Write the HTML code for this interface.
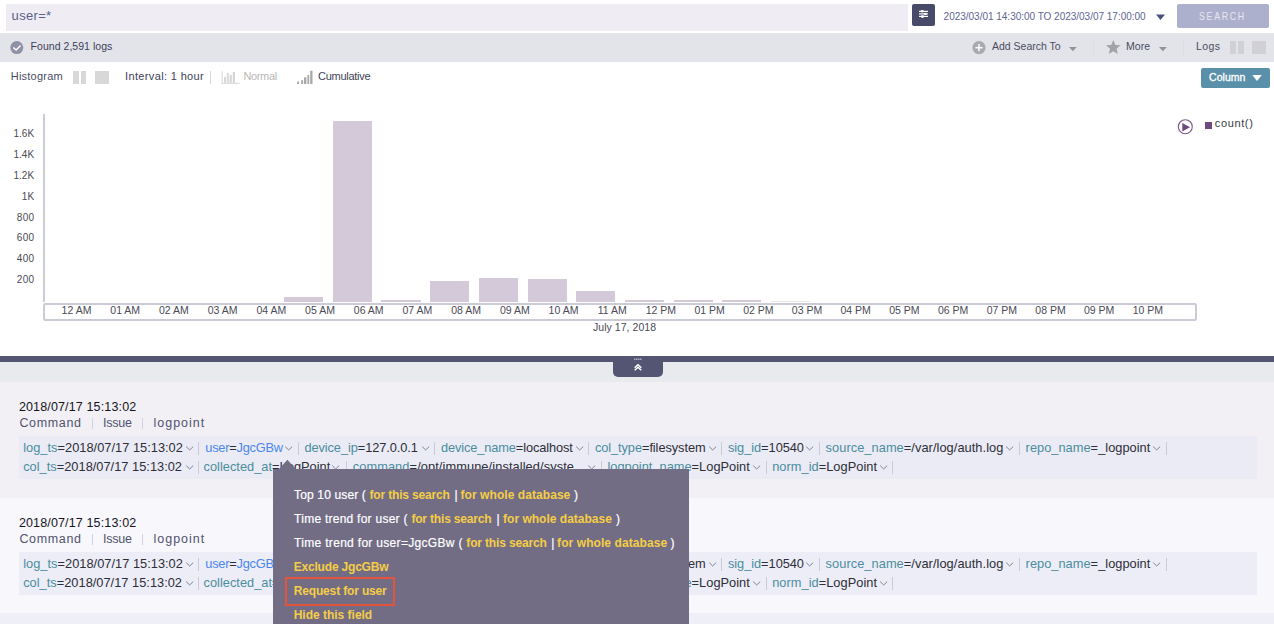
<!DOCTYPE html>
<html><head><meta charset="utf-8"><style>
html,body{margin:0;padding:0;width:1274px;height:624px;overflow:hidden;background:#fff;position:relative;font-family:"Liberation Sans",sans-serif;}
.t{position:absolute;white-space:nowrap;}
.r{position:absolute;}
</style></head><body>
<div class="r" style="left:6px;top:4px;width:902px;height:27px;background:#efedf3;"></div>
<div class="t" style="left:11.60px;top:9.00px;font-size:13px;line-height:13px;color:#5b5f8c;letter-spacing:0.313px;">user=*</div>
<div class="r" style="left:912px;top:4px;width:23px;height:22px;background:#474a68;border-radius:2px;"></div>
<svg class="r" style="left:912px;top:4px" width="23" height="22" viewBox="0 0 23 22">
<g stroke="#fff" stroke-width="1.2">
<line x1="7" y1="7.4" x2="16" y2="7.4"/><line x1="7" y1="9.9" x2="16" y2="9.9"/><line x1="7" y1="12.4" x2="16" y2="12.4"/>
</g>
<g fill="#fff"><ellipse cx="10.2" cy="7.2" rx="1.7" ry="1.3"/><ellipse cx="13.3" cy="9.9" rx="1.5" ry="1.1"/><ellipse cx="10.5" cy="12.6" rx="1.7" ry="1.3"/></g>
</svg>
<div class="t" style="left:943.60px;top:11.54px;font-size:10px;line-height:10px;color:#5f6593;letter-spacing:-0.014px;">2023/03/01 14:30:00 TO 2023/03/07 17:00:00</div>
<svg class="r" style="left:1155px;top:14px" width="11" height="7"><polygon points="1,0.5 10,0.5 5.5,6" fill="#4b4f80"/></svg>
<div class="r" style="left:1177px;top:4px;width:92px;height:24px;background:#adb0cc;border-radius:2px;"></div>
<div class="t" style="left:1198.90px;top:11.41px;font-size:10.5px;line-height:10.5px;color:#e6e7f0;letter-spacing:2.009px;transform:scaleX(0.84);transform-origin:0 0;">SEARCH</div>
<div class="r" style="left:0px;top:33px;width:1274px;height:29px;background:#e3e4ea;"></div>
<svg class="r" style="left:10px;top:41px" width="14" height="14" viewBox="0 0 14 14">
<circle cx="6.8" cy="6.6" r="6.5" fill="#8f91a6"/>
<polyline points="3.3,6.5 6.1,9.1 10.6,4.6" fill="none" stroke="#fff" stroke-width="1.35"/>
</svg>
<div class="t" style="left:30.60px;top:40.51px;font-size:10.5px;line-height:10.5px;color:#3d3f5a;letter-spacing:0.037px;">Found 2,591 logs</div>
<svg class="r" style="left:972px;top:41px" width="14" height="14" viewBox="0 0 14 14">
<circle cx="7" cy="6.7" r="6.6" fill="#a9a9af"/>
<line x1="3.4" y1="6.7" x2="10.6" y2="6.7" stroke="#fff" stroke-width="1.5"/>
<line x1="7" y1="3.1" x2="7" y2="10.3" stroke="#fff" stroke-width="1.5"/>
</svg>
<div class="t" style="left:992.00px;top:41.31px;font-size:10.5px;line-height:10.5px;color:#4a4c60;letter-spacing:-0.008px;">Add Search To</div>
<svg class="r" style="left:1069px;top:46.5px" width="9" height="6"><polygon points="0,0 7.8,0 3.9,4.3" fill="#939399"/></svg>
<div class="r" style="left:1093px;top:40px;width:1px;height:16px;background:#dcdce2;"></div>
<svg class="r" style="left:1105.5px;top:39.8px" width="15" height="15"><polygon points="7.30,0.00 9.33,4.88 14.60,5.30 10.58,8.74 11.81,13.89 7.30,11.13 2.79,13.89 4.02,8.74 0.00,5.30 5.27,4.88" fill="#a2a2a8"/></svg>
<div class="t" style="left:1126.00px;top:41.31px;font-size:10.5px;line-height:10.5px;color:#4a4c60;letter-spacing:0.027px;">More</div>
<svg class="r" style="left:1159px;top:46.5px" width="9" height="6"><polygon points="0,0 7.8,0 3.9,4.3" fill="#939399"/></svg>
<div class="r" style="left:1183px;top:40px;width:1px;height:16px;background:#dcdce2;"></div>
<div class="t" style="left:1196.00px;top:41.31px;font-size:10.5px;line-height:10.5px;color:#4a4c60;letter-spacing:0.412px;">Logs</div>
<div class="r" style="left:1230px;top:41px;width:5.5px;height:13px;background:#d0d0d6;"></div>
<div class="r" style="left:1238px;top:41px;width:5.5px;height:13px;background:#d0d0d6;"></div>
<div class="r" style="left:1252px;top:41px;width:14px;height:13px;background:#d0d0d6;"></div>
<div class="t" style="left:10.70px;top:70.69px;font-size:11px;line-height:11px;color:#4a4c63;letter-spacing:0.247px;">Histogram</div>
<div class="r" style="left:73px;top:71px;width:5.5px;height:12.7px;background:#d8d8d8;"></div>
<div class="r" style="left:80.8px;top:71px;width:5.5px;height:12.7px;background:#d8d8d8;"></div>
<div class="r" style="left:95.3px;top:71px;width:13.3px;height:12.7px;background:#d8d8d8;"></div>
<div class="t" style="left:125.10px;top:70.69px;font-size:11px;line-height:11px;color:#3e3f58;letter-spacing:0.349px;">Interval: 1 hour</div>
<div class="r" style="left:210px;top:71px;width:1px;height:13px;background:#d8d8d8;"></div>
<svg class="r" style="left:221px;top:71px" width="20" height="14" viewBox="0 0 20 14">
<g fill="#d6d6d6"><rect x="0.6" y="0.2" width="1" height="12.6"/><rect x="0.6" y="11.8" width="18" height="1"/>
<rect x="3" y="5.8" width="1.9" height="6"/><rect x="5.8" y="2" width="1.9" height="9.8"/><rect x="8.6" y="4" width="2.2" height="7.8"/><rect x="11.8" y="1.1" width="2.2" height="10.7"/></g></svg>
<div class="t" style="left:243.50px;top:70.69px;font-size:11px;line-height:11px;color:#b8b8b8;letter-spacing:-0.371px;">Normal</div>
<svg class="r" style="left:296px;top:70px" width="18" height="15" viewBox="0 0 18 15">
<g fill="#a9a9a9"><rect x="1" y="11.6" width="2" height="2.4"/><rect x="5.2" y="10.2" width="1.9" height="3.8"/><rect x="8" y="7.3" width="2.4" height="6.7"/><rect x="11.4" y="5" width="1.8" height="9"/><rect x="14.2" y="0.7" width="2.3" height="13.3"/></g></svg>
<div class="t" style="left:318.00px;top:70.69px;font-size:11px;line-height:11px;color:#3e3f58;letter-spacing:-0.269px;">Cumulative</div>
<div class="r" style="left:1201px;top:68px;width:69px;height:20px;background:#5b90ab;border-radius:2px;"></div>
<div class="t" style="left:1209.00px;top:71.71px;font-size:10.5px;line-height:10.5px;color:#ffffff;letter-spacing:0.043px;-webkit-text-stroke:0.3px #fff;">Column</div>
<svg class="r" style="left:1251.5px;top:75px" width="11" height="7"><polygon points="0.3,0 9.8,0 5.05,6" fill="#fff"/></svg>
<div class="r" style="left:43px;top:114px;width:2px;height:188px;background:#cbccd7;"></div>
<div class="t" style="left:13.53px;top:129.44px;font-size:10px;line-height:10px;color:#4a4a55;">1.6K</div>
<div class="t" style="left:13.53px;top:150.24px;font-size:10px;line-height:10px;color:#4a4a55;">1.4K</div>
<div class="t" style="left:13.53px;top:171.03px;font-size:10px;line-height:10px;color:#4a4a55;">1.2K</div>
<div class="t" style="left:21.87px;top:191.84px;font-size:10px;line-height:10px;color:#4a4a55;">1K</div>
<div class="t" style="left:16.80px;top:212.64px;font-size:10px;line-height:10px;color:#4a4a55;letter-spacing:0.310px;">800</div>
<div class="t" style="left:16.80px;top:233.44px;font-size:10px;line-height:10px;color:#4a4a55;letter-spacing:0.310px;">600</div>
<div class="t" style="left:16.80px;top:254.24px;font-size:10px;line-height:10px;color:#4a4a55;letter-spacing:0.310px;">400</div>
<div class="t" style="left:16.80px;top:275.04px;font-size:10px;line-height:10px;color:#4a4a55;letter-spacing:0.310px;">200</div>
<div class="r" style="left:43px;top:303px;width:1150px;height:14px;border:2px solid #cacbd6;border-radius:2px;"></div>
<div class="t" style="left:61.62px;top:305.31px;font-size:10.5px;line-height:10.5px;color:#4a4a55;">12 AM</div>
<div class="t" style="left:110.32px;top:305.31px;font-size:10.5px;line-height:10.5px;color:#4a4a55;">01 AM</div>
<div class="t" style="left:159.02px;top:305.31px;font-size:10.5px;line-height:10.5px;color:#4a4a55;">02 AM</div>
<div class="t" style="left:207.72px;top:305.31px;font-size:10.5px;line-height:10.5px;color:#4a4a55;">03 AM</div>
<div class="t" style="left:256.42px;top:305.31px;font-size:10.5px;line-height:10.5px;color:#4a4a55;">04 AM</div>
<div class="t" style="left:305.12px;top:305.31px;font-size:10.5px;line-height:10.5px;color:#4a4a55;">05 AM</div>
<div class="t" style="left:353.82px;top:305.31px;font-size:10.5px;line-height:10.5px;color:#4a4a55;">06 AM</div>
<div class="t" style="left:402.52px;top:305.31px;font-size:10.5px;line-height:10.5px;color:#4a4a55;">07 AM</div>
<div class="t" style="left:451.22px;top:305.31px;font-size:10.5px;line-height:10.5px;color:#4a4a55;">08 AM</div>
<div class="t" style="left:499.92px;top:305.31px;font-size:10.5px;line-height:10.5px;color:#4a4a55;">09 AM</div>
<div class="t" style="left:548.62px;top:305.31px;font-size:10.5px;line-height:10.5px;color:#4a4a55;">10 AM</div>
<div class="t" style="left:597.70px;top:305.31px;font-size:10.5px;line-height:10.5px;color:#4a4a55;">11 AM</div>
<div class="t" style="left:645.73px;top:305.31px;font-size:10.5px;line-height:10.5px;color:#4a4a55;">12 PM</div>
<div class="t" style="left:694.43px;top:305.31px;font-size:10.5px;line-height:10.5px;color:#4a4a55;">01 PM</div>
<div class="t" style="left:743.13px;top:305.31px;font-size:10.5px;line-height:10.5px;color:#4a4a55;">02 PM</div>
<div class="t" style="left:791.83px;top:305.31px;font-size:10.5px;line-height:10.5px;color:#4a4a55;">03 PM</div>
<div class="t" style="left:840.53px;top:305.31px;font-size:10.5px;line-height:10.5px;color:#4a4a55;">04 PM</div>
<div class="t" style="left:889.23px;top:305.31px;font-size:10.5px;line-height:10.5px;color:#4a4a55;">05 PM</div>
<div class="t" style="left:937.93px;top:305.31px;font-size:10.5px;line-height:10.5px;color:#4a4a55;">06 PM</div>
<div class="t" style="left:986.63px;top:305.31px;font-size:10.5px;line-height:10.5px;color:#4a4a55;">07 PM</div>
<div class="t" style="left:1035.33px;top:305.31px;font-size:10.5px;line-height:10.5px;color:#4a4a55;">08 PM</div>
<div class="t" style="left:1084.03px;top:305.31px;font-size:10.5px;line-height:10.5px;color:#4a4a55;">09 PM</div>
<div class="t" style="left:1132.73px;top:305.31px;font-size:10.5px;line-height:10.5px;color:#4a4a55;">10 PM</div>
<div class="t" style="left:593.00px;top:321.91px;font-size:10.5px;line-height:10.5px;color:#4a4a55;letter-spacing:0.045px;">July 17, 2018</div>
<div class="r" style="left:284.0px;top:297px;width:39.2px;height:4.7px;background:#d4c9d8;"></div>
<div class="r" style="left:332.7px;top:120.8px;width:39.2px;height:180.9px;background:#d4c9d8;"></div>
<div class="r" style="left:381.4px;top:300px;width:39.2px;height:1.7px;background:#d4c9d8;"></div>
<div class="r" style="left:430.1px;top:281.3px;width:39.2px;height:20.4px;background:#d4c9d8;"></div>
<div class="r" style="left:478.8px;top:278px;width:39.2px;height:23.7px;background:#d4c9d8;"></div>
<div class="r" style="left:527.5px;top:278.5px;width:39.2px;height:23.2px;background:#d4c9d8;"></div>
<div class="r" style="left:576.2px;top:290.8px;width:39.2px;height:10.9px;background:#d4c9d8;"></div>
<div class="r" style="left:624.9px;top:300.3px;width:39.2px;height:1.4px;background:#d4c9d8;"></div>
<div class="r" style="left:673.6px;top:300.3px;width:39.2px;height:1.4px;background:#d4c9d8;"></div>
<div class="r" style="left:722.3px;top:300.3px;width:39.2px;height:1.4px;background:#d4c9d8;"></div>
<div class="r" style="left:771.0px;top:301px;width:39.2px;height:0.7px;background:#e8e2ea;"></div>
<svg class="r" style="left:1176px;top:118px" width="18" height="18" viewBox="0 0 18 18">
<circle cx="9.3" cy="8.7" r="7" fill="none" stroke="#7a5a8c" stroke-width="1.1"/>
<polygon points="6.3,5 6.3,13.5 14,9.2" fill="#6f4a7e"/></svg>
<div class="r" style="left:1205px;top:121.6px;width:7.2px;height:7.2px;background:#6f4a7e;"></div>
<div class="t" style="left:1214.80px;top:117.69px;font-size:11px;line-height:11px;color:#3a3a48;letter-spacing:0.628px;">count()</div>
<div class="r" style="left:0px;top:356px;width:1274px;height:6px;background:#535572;"></div>
<div class="r" style="left:0px;top:362px;width:1274px;height:20px;background:#e9eaee;"></div>
<div class="r" style="left:613px;top:356px;width:50px;height:21px;background:#535572;border-radius:0 0 5px 5px;"></div>
<svg class="r" style="left:630px;top:356px" width="16" height="18" viewBox="0 0 16 18">
<g fill="#fff"><rect x="4.3" y="2.6" width="1.1" height="1.1"/><rect x="6.3" y="2.6" width="1.1" height="1.1"/><rect x="8.3" y="2.6" width="1.1" height="1.1"/><rect x="10.3" y="2.6" width="1.1" height="1.1"/></g>
<polyline points="4.7,11.8 8,8.7 11.3,11.8" fill="none" stroke="#fff" stroke-width="1.5"/>
<polyline points="4.7,14.3 8,11.2 11.3,14.3" fill="none" stroke="#fff" stroke-width="1.5"/>
</svg>
<div class="r" style="left:0px;top:382px;width:1274px;height:116px;background:#f2f0f5;"></div>
<div class="r" style="left:0px;top:498px;width:1274px;height:115px;background:#f8f7fc;"></div>
<div class="r" style="left:0px;top:613px;width:1274px;height:11px;background:#efeff7;"></div>
<div class="t" style="left:18.90px;top:400.82px;font-size:12.5px;line-height:12.5px;color:#15151c;letter-spacing:0.145px;">2018/07/17 15:13:02</div>
<div class="t" style="left:19.40px;top:417.22px;font-size:12.5px;line-height:12.5px;color:#50536e;letter-spacing:0.656px;">Command</div>
<div class="r" style="left:92px;top:418px;width:1px;height:11px;background:#cfd3e0;"></div>
<div class="t" style="left:102.90px;top:417.22px;font-size:12.5px;line-height:12.5px;color:#50536e;letter-spacing:-0.194px;">Issue</div>
<div class="r" style="left:142px;top:418px;width:1px;height:11px;background:#cfd3e0;"></div>
<div class="t" style="left:153.50px;top:417.22px;font-size:12.5px;line-height:12.5px;color:#50536e;letter-spacing:0.988px;">logpoint</div>
<div class="r" style="left:19px;top:436px;width:1238px;height:43px;background:#eaebf4;"></div>
<div class="t" style="left:23.20px;top:441.86px;font-size:12.8px;line-height:12.8px;letter-spacing:0.025px;"><span style="color:#4b8d9e">log_ts</span><span style="color:#2e2e38">=</span><span style="color:#2e2e38">2018/07/17 15:13:02</span></div>
<svg class="r" style="left:185.50px;top:445.70px" width="9" height="6" viewBox="0 0 9 6"><polyline points="0.2,0.6 3.7,4 7.2,0.6" fill="none" stroke="#7f8199" stroke-width="1"/></svg>
<div class="r" style="left:198.0px;top:442.2px;width:1px;height:12.5px;background:#c9cbd6;"></div>
<div class="t" style="left:205.30px;top:441.86px;font-size:12.8px;line-height:12.8px;letter-spacing:-0.236px;"><span style="color:#4c86ee">user</span><span style="color:#2e2e38">=</span><span style="color:#4c86ee">JgcGBw</span></div>
<svg class="r" style="left:285.30px;top:445.70px" width="9" height="6" viewBox="0 0 9 6"><polyline points="0.2,0.6 3.7,4 7.2,0.6" fill="none" stroke="#7f8199" stroke-width="1"/></svg>
<div class="r" style="left:297.5px;top:442.2px;width:1px;height:12.5px;background:#c9cbd6;"></div>
<div class="t" style="left:304.40px;top:441.86px;font-size:12.8px;line-height:12.8px;letter-spacing:-0.080px;"><span style="color:#4b8d9e">device_ip</span><span style="color:#2e2e38">=</span><span style="color:#2e2e38">127.0.0.1</span></div>
<svg class="r" style="left:421.50px;top:445.70px" width="9" height="6" viewBox="0 0 9 6"><polyline points="0.2,0.6 3.7,4 7.2,0.6" fill="none" stroke="#7f8199" stroke-width="1"/></svg>
<div class="r" style="left:433.9px;top:442.2px;width:1px;height:12.5px;background:#c9cbd6;"></div>
<div class="t" style="left:441.00px;top:441.86px;font-size:12.8px;line-height:12.8px;letter-spacing:-0.117px;"><span style="color:#4b8d9e">device_name</span><span style="color:#2e2e38">=</span><span style="color:#2e2e38">localhost</span></div>
<svg class="r" style="left:575.90px;top:445.70px" width="9" height="6" viewBox="0 0 9 6"><polyline points="0.2,0.6 3.7,4 7.2,0.6" fill="none" stroke="#7f8199" stroke-width="1"/></svg>
<div class="r" style="left:587.5px;top:442.2px;width:1px;height:12.5px;background:#c9cbd6;"></div>
<div class="t" style="left:594.90px;top:441.86px;font-size:12.8px;line-height:12.8px;letter-spacing:-0.075px;"><span style="color:#4b8d9e">col_type</span><span style="color:#2e2e38">=</span><span style="color:#2e2e38">filesystem</span></div>
<svg class="r" style="left:708.80px;top:445.70px" width="9" height="6" viewBox="0 0 9 6"><polyline points="0.2,0.6 3.7,4 7.2,0.6" fill="none" stroke="#7f8199" stroke-width="1"/></svg>
<div class="r" style="left:721.1px;top:442.2px;width:1px;height:12.5px;background:#c9cbd6;"></div>
<div class="t" style="left:727.90px;top:441.86px;font-size:12.8px;line-height:12.8px;letter-spacing:-0.038px;"><span style="color:#4b8d9e">sig_id</span><span style="color:#2e2e38">=</span><span style="color:#2e2e38">10540</span></div>
<svg class="r" style="left:806.30px;top:445.70px" width="9" height="6" viewBox="0 0 9 6"><polyline points="0.2,0.6 3.7,4 7.2,0.6" fill="none" stroke="#7f8199" stroke-width="1"/></svg>
<div class="r" style="left:818.8px;top:442.2px;width:1px;height:12.5px;background:#c9cbd6;"></div>
<div class="t" style="left:825.60px;top:441.86px;font-size:12.8px;line-height:12.8px;letter-spacing:0.060px;"><span style="color:#4b8d9e">source_name</span><span style="color:#2e2e38">=</span><span style="color:#2e2e38">/var/log/auth.log</span></div>
<svg class="r" style="left:1006.00px;top:445.70px" width="9" height="6" viewBox="0 0 9 6"><polyline points="0.2,0.6 3.7,4 7.2,0.6" fill="none" stroke="#7f8199" stroke-width="1"/></svg>
<div class="r" style="left:1018.5px;top:442.2px;width:1px;height:12.5px;background:#c9cbd6;"></div>
<div class="t" style="left:1025.60px;top:441.86px;font-size:12.8px;line-height:12.8px;letter-spacing:0.029px;"><span style="color:#4b8d9e">repo_name</span><span style="color:#2e2e38">=</span><span style="color:#2e2e38">_logpoint</span></div>
<svg class="r" style="left:1152.90px;top:445.70px" width="9" height="6" viewBox="0 0 9 6"><polyline points="0.2,0.6 3.7,4 7.2,0.6" fill="none" stroke="#7f8199" stroke-width="1"/></svg>
<div class="r" style="left:1165.5px;top:442.2px;width:1px;height:12.5px;background:#c9cbd6;"></div>
<div class="t" style="left:23.20px;top:460.66px;font-size:12.8px;line-height:12.8px;letter-spacing:0.018px;"><span style="color:#4b8d9e">col_ts</span><span style="color:#2e2e38">=</span><span style="color:#2e2e38">2018/07/17 15:13:02</span></div>
<svg class="r" style="left:185.50px;top:464.50px" width="9" height="6" viewBox="0 0 9 6"><polyline points="0.2,0.6 3.7,4 7.2,0.6" fill="none" stroke="#7f8199" stroke-width="1"/></svg>
<div class="r" style="left:197.5px;top:461.0px;width:1px;height:12.5px;background:#c9cbd6;"></div>
<div class="t" style="left:203.50px;top:460.66px;font-size:12.8px;line-height:12.8px;letter-spacing:0.024px;"><span style="color:#4b8d9e">collected_at</span><span style="color:#2e2e38">=</span><span style="color:#2e2e38">LogPoint</span></div>
<svg class="r" style="left:332.20px;top:464.50px" width="9" height="6" viewBox="0 0 9 6"><polyline points="0.2,0.6 3.7,4 7.2,0.6" fill="none" stroke="#7f8199" stroke-width="1"/></svg>
<div class="r" style="left:345.8px;top:461.0px;width:1px;height:12.5px;background:#c9cbd6;"></div>
<div class="t" style="left:352.70px;top:460.66px;font-size:12.8px;line-height:12.8px;letter-spacing:0.095px;"><span style="color:#4b8d9e">command</span><span style="color:#2e2e38">=</span><span style="color:#2e2e38">/opt/immune/installed/syste</span></div>
<svg class="r" style="left:587.50px;top:464.50px" width="9" height="6" viewBox="0 0 9 6"><polyline points="0.2,0.6 3.7,4 7.2,0.6" fill="none" stroke="#7f8199" stroke-width="1"/></svg>
<div class="r" style="left:600.5px;top:461.0px;width:1px;height:12.5px;background:#c9cbd6;"></div>
<div class="t" style="left:607.40px;top:460.66px;font-size:12.8px;line-height:12.8px;letter-spacing:0.020px;"><span style="color:#4b8d9e">logpoint_name</span><span style="color:#2e2e38">=</span><span style="color:#2e2e38">LogPoint</span></div>
<svg class="r" style="left:752.90px;top:464.50px" width="9" height="6" viewBox="0 0 9 6"><polyline points="0.2,0.6 3.7,4 7.2,0.6" fill="none" stroke="#7f8199" stroke-width="1"/></svg>
<div class="r" style="left:765.8px;top:461.0px;width:1px;height:12.5px;background:#c9cbd6;"></div>
<div class="t" style="left:772.20px;top:460.66px;font-size:12.8px;line-height:12.8px;letter-spacing:0.036px;"><span style="color:#4b8d9e">norm_id</span><span style="color:#2e2e38">=</span><span style="color:#2e2e38">LogPoint</span></div>
<svg class="r" style="left:879.50px;top:464.50px" width="9" height="6" viewBox="0 0 9 6"><polyline points="0.2,0.6 3.7,4 7.2,0.6" fill="none" stroke="#7f8199" stroke-width="1"/></svg>
<div class="r" style="left:891.7px;top:461.0px;width:1px;height:12.5px;background:#c9cbd6;"></div>
<div class="t" style="left:18.90px;top:516.82px;font-size:12.5px;line-height:12.5px;color:#15151c;letter-spacing:0.145px;">2018/07/17 15:13:02</div>
<div class="t" style="left:19.40px;top:533.22px;font-size:12.5px;line-height:12.5px;color:#50536e;letter-spacing:0.656px;">Command</div>
<div class="r" style="left:92px;top:534px;width:1px;height:11px;background:#cfd3e0;"></div>
<div class="t" style="left:102.90px;top:533.22px;font-size:12.5px;line-height:12.5px;color:#50536e;letter-spacing:-0.194px;">Issue</div>
<div class="r" style="left:142px;top:534px;width:1px;height:11px;background:#cfd3e0;"></div>
<div class="t" style="left:153.50px;top:533.22px;font-size:12.5px;line-height:12.5px;color:#50536e;letter-spacing:0.988px;">logpoint</div>
<div class="r" style="left:19px;top:552px;width:1238px;height:43px;background:#ecedf6;"></div>
<div class="t" style="left:23.20px;top:557.86px;font-size:12.8px;line-height:12.8px;letter-spacing:0.025px;"><span style="color:#4b8d9e">log_ts</span><span style="color:#2e2e38">=</span><span style="color:#2e2e38">2018/07/17 15:13:02</span></div>
<svg class="r" style="left:185.50px;top:561.70px" width="9" height="6" viewBox="0 0 9 6"><polyline points="0.2,0.6 3.7,4 7.2,0.6" fill="none" stroke="#7f8199" stroke-width="1"/></svg>
<div class="r" style="left:198.0px;top:558.2px;width:1px;height:12.5px;background:#c9cbd6;"></div>
<div class="t" style="left:205.30px;top:557.86px;font-size:12.8px;line-height:12.8px;letter-spacing:-0.236px;"><span style="color:#4c86ee">user</span><span style="color:#2e2e38">=</span><span style="color:#4c86ee">JgcGBw</span></div>
<svg class="r" style="left:285.30px;top:561.70px" width="9" height="6" viewBox="0 0 9 6"><polyline points="0.2,0.6 3.7,4 7.2,0.6" fill="none" stroke="#7f8199" stroke-width="1"/></svg>
<div class="r" style="left:297.5px;top:558.2px;width:1px;height:12.5px;background:#c9cbd6;"></div>
<div class="t" style="left:304.40px;top:557.86px;font-size:12.8px;line-height:12.8px;letter-spacing:-0.080px;"><span style="color:#4b8d9e">device_ip</span><span style="color:#2e2e38">=</span><span style="color:#2e2e38">127.0.0.1</span></div>
<svg class="r" style="left:421.50px;top:561.70px" width="9" height="6" viewBox="0 0 9 6"><polyline points="0.2,0.6 3.7,4 7.2,0.6" fill="none" stroke="#7f8199" stroke-width="1"/></svg>
<div class="r" style="left:433.9px;top:558.2px;width:1px;height:12.5px;background:#c9cbd6;"></div>
<div class="t" style="left:441.00px;top:557.86px;font-size:12.8px;line-height:12.8px;letter-spacing:-0.117px;"><span style="color:#4b8d9e">device_name</span><span style="color:#2e2e38">=</span><span style="color:#2e2e38">localhost</span></div>
<svg class="r" style="left:575.90px;top:561.70px" width="9" height="6" viewBox="0 0 9 6"><polyline points="0.2,0.6 3.7,4 7.2,0.6" fill="none" stroke="#7f8199" stroke-width="1"/></svg>
<div class="r" style="left:587.5px;top:558.2px;width:1px;height:12.5px;background:#c9cbd6;"></div>
<div class="t" style="left:594.90px;top:557.86px;font-size:12.8px;line-height:12.8px;letter-spacing:-0.075px;"><span style="color:#4b8d9e">col_type</span><span style="color:#2e2e38">=</span><span style="color:#2e2e38">filesystem</span></div>
<svg class="r" style="left:708.80px;top:561.70px" width="9" height="6" viewBox="0 0 9 6"><polyline points="0.2,0.6 3.7,4 7.2,0.6" fill="none" stroke="#7f8199" stroke-width="1"/></svg>
<div class="r" style="left:721.1px;top:558.2px;width:1px;height:12.5px;background:#c9cbd6;"></div>
<div class="t" style="left:727.90px;top:557.86px;font-size:12.8px;line-height:12.8px;letter-spacing:-0.038px;"><span style="color:#4b8d9e">sig_id</span><span style="color:#2e2e38">=</span><span style="color:#2e2e38">10540</span></div>
<svg class="r" style="left:806.30px;top:561.70px" width="9" height="6" viewBox="0 0 9 6"><polyline points="0.2,0.6 3.7,4 7.2,0.6" fill="none" stroke="#7f8199" stroke-width="1"/></svg>
<div class="r" style="left:818.8px;top:558.2px;width:1px;height:12.5px;background:#c9cbd6;"></div>
<div class="t" style="left:825.60px;top:557.86px;font-size:12.8px;line-height:12.8px;letter-spacing:0.060px;"><span style="color:#4b8d9e">source_name</span><span style="color:#2e2e38">=</span><span style="color:#2e2e38">/var/log/auth.log</span></div>
<svg class="r" style="left:1006.00px;top:561.70px" width="9" height="6" viewBox="0 0 9 6"><polyline points="0.2,0.6 3.7,4 7.2,0.6" fill="none" stroke="#7f8199" stroke-width="1"/></svg>
<div class="r" style="left:1018.5px;top:558.2px;width:1px;height:12.5px;background:#c9cbd6;"></div>
<div class="t" style="left:1025.60px;top:557.86px;font-size:12.8px;line-height:12.8px;letter-spacing:0.029px;"><span style="color:#4b8d9e">repo_name</span><span style="color:#2e2e38">=</span><span style="color:#2e2e38">_logpoint</span></div>
<svg class="r" style="left:1152.90px;top:561.70px" width="9" height="6" viewBox="0 0 9 6"><polyline points="0.2,0.6 3.7,4 7.2,0.6" fill="none" stroke="#7f8199" stroke-width="1"/></svg>
<div class="r" style="left:1165.5px;top:558.2px;width:1px;height:12.5px;background:#c9cbd6;"></div>
<div class="t" style="left:23.20px;top:576.66px;font-size:12.8px;line-height:12.8px;letter-spacing:0.018px;"><span style="color:#4b8d9e">col_ts</span><span style="color:#2e2e38">=</span><span style="color:#2e2e38">2018/07/17 15:13:02</span></div>
<svg class="r" style="left:185.50px;top:580.50px" width="9" height="6" viewBox="0 0 9 6"><polyline points="0.2,0.6 3.7,4 7.2,0.6" fill="none" stroke="#7f8199" stroke-width="1"/></svg>
<div class="r" style="left:197.5px;top:577.0px;width:1px;height:12.5px;background:#c9cbd6;"></div>
<div class="t" style="left:203.50px;top:576.66px;font-size:12.8px;line-height:12.8px;letter-spacing:0.024px;"><span style="color:#4b8d9e">collected_at</span><span style="color:#2e2e38">=</span><span style="color:#2e2e38">LogPoint</span></div>
<svg class="r" style="left:332.20px;top:580.50px" width="9" height="6" viewBox="0 0 9 6"><polyline points="0.2,0.6 3.7,4 7.2,0.6" fill="none" stroke="#7f8199" stroke-width="1"/></svg>
<div class="r" style="left:345.8px;top:577.0px;width:1px;height:12.5px;background:#c9cbd6;"></div>
<div class="t" style="left:352.70px;top:576.66px;font-size:12.8px;line-height:12.8px;letter-spacing:0.095px;"><span style="color:#4b8d9e">command</span><span style="color:#2e2e38">=</span><span style="color:#2e2e38">/opt/immune/installed/syste</span></div>
<svg class="r" style="left:587.50px;top:580.50px" width="9" height="6" viewBox="0 0 9 6"><polyline points="0.2,0.6 3.7,4 7.2,0.6" fill="none" stroke="#7f8199" stroke-width="1"/></svg>
<div class="r" style="left:600.5px;top:577.0px;width:1px;height:12.5px;background:#c9cbd6;"></div>
<div class="t" style="left:607.40px;top:576.66px;font-size:12.8px;line-height:12.8px;letter-spacing:0.020px;"><span style="color:#4b8d9e">logpoint_name</span><span style="color:#2e2e38">=</span><span style="color:#2e2e38">LogPoint</span></div>
<svg class="r" style="left:752.90px;top:580.50px" width="9" height="6" viewBox="0 0 9 6"><polyline points="0.2,0.6 3.7,4 7.2,0.6" fill="none" stroke="#7f8199" stroke-width="1"/></svg>
<div class="r" style="left:765.8px;top:577.0px;width:1px;height:12.5px;background:#c9cbd6;"></div>
<div class="t" style="left:772.20px;top:576.66px;font-size:12.8px;line-height:12.8px;letter-spacing:0.036px;"><span style="color:#4b8d9e">norm_id</span><span style="color:#2e2e38">=</span><span style="color:#2e2e38">LogPoint</span></div>
<svg class="r" style="left:879.50px;top:580.50px" width="9" height="6" viewBox="0 0 9 6"><polyline points="0.2,0.6 3.7,4 7.2,0.6" fill="none" stroke="#7f8199" stroke-width="1"/></svg>
<div class="r" style="left:891.7px;top:577.0px;width:1px;height:12.5px;background:#c9cbd6;"></div>
<div class="r" style="left:273px;top:469px;width:415.5px;height:160px;background:#726d85;"></div>
<svg class="r" style="left:276px;top:459px" width="22" height="11"><polygon points="2.6,10.5 11.4,0.8 20.2,10.5" fill="#726d85"/></svg>
<div class="t" style="left:294.10px;top:488.84px;font-size:12px;line-height:12px;color:#ffffff;letter-spacing:0.139px;-webkit-text-stroke:0.2px #fff;">Top 10 user (</div>
<div class="t" style="left:369.50px;top:488.84px;font-size:12px;line-height:12px;color:#f6cd45;letter-spacing:-0.171px;font-weight:bold;">for this search</div>
<div class="t" style="left:454.50px;top:488.84px;font-size:12px;line-height:12px;color:#ffffff;-webkit-text-stroke:0.2px #fff;">|</div>
<div class="t" style="left:460.50px;top:488.84px;font-size:12px;line-height:12px;color:#f6cd45;letter-spacing:0.065px;font-weight:bold;">for whole database</div>
<div class="t" style="left:574.00px;top:488.84px;font-size:12px;line-height:12px;color:#ffffff;-webkit-text-stroke:0.2px #fff;">)</div>
<div class="t" style="left:294.10px;top:512.84px;font-size:12px;line-height:12px;color:#ffffff;letter-spacing:0.252px;-webkit-text-stroke:0.2px #fff;">Time trend for user (</div>
<div class="t" style="left:411.40px;top:512.84px;font-size:12px;line-height:12px;color:#f6cd45;letter-spacing:-0.171px;font-weight:bold;">for this search</div>
<div class="t" style="left:496.60px;top:512.84px;font-size:12px;line-height:12px;color:#ffffff;-webkit-text-stroke:0.2px #fff;">|</div>
<div class="t" style="left:503.10px;top:512.84px;font-size:12px;line-height:12px;color:#f6cd45;letter-spacing:0.006px;font-weight:bold;">for whole database</div>
<div class="t" style="left:616.00px;top:512.84px;font-size:12px;line-height:12px;color:#ffffff;-webkit-text-stroke:0.2px #fff;">)</div>
<div class="t" style="left:294.10px;top:536.84px;font-size:12px;line-height:12px;color:#ffffff;letter-spacing:0.310px;-webkit-text-stroke:0.2px #fff;">Time trend for user=JgcGBw (</div>
<div class="t" style="left:466.30px;top:536.84px;font-size:12px;line-height:12px;color:#f6cd45;letter-spacing:-0.157px;font-weight:bold;">for this search</div>
<div class="t" style="left:551.30px;top:536.84px;font-size:12px;line-height:12px;color:#ffffff;-webkit-text-stroke:0.2px #fff;">|</div>
<div class="t" style="left:557.10px;top:536.84px;font-size:12px;line-height:12px;color:#f6cd45;letter-spacing:0.077px;font-weight:bold;">for whole database</div>
<div class="t" style="left:670.40px;top:536.84px;font-size:12px;line-height:12px;color:#ffffff;-webkit-text-stroke:0.2px #fff;">)</div>
<div class="t" style="left:293.70px;top:560.84px;font-size:12px;line-height:12px;color:#f6cd45;letter-spacing:-0.192px;font-weight:bold;">Exclude JgcGBw</div>
<div class="t" style="left:293.70px;top:584.84px;font-size:12px;line-height:12px;color:#f6cd45;letter-spacing:-0.150px;font-weight:bold;">Request for user</div>
<div class="t" style="left:293.70px;top:608.84px;font-size:12px;line-height:12px;color:#f6cd45;letter-spacing:-0.012px;font-weight:bold;">Hide this field</div>
<div class="r" style="left:285px;top:577px;width:106px;height:25px;border:2px solid #e4533e;"></div>
</body></html>
